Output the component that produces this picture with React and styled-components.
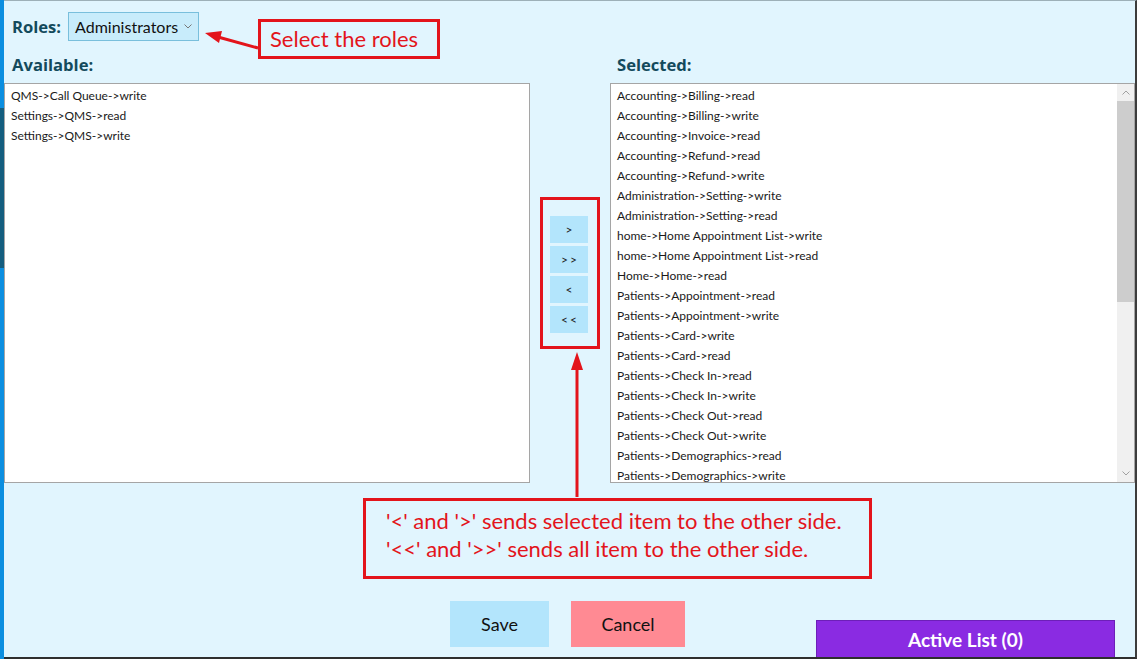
import styled, { createGlobalStyle } from 'styled-components'

const GlobalStyle = createGlobalStyle`
  html, body {
    margin: 0;
    padding: 0;
  }
  body {
    font-family: Lato, "Noto Sans", sans-serif;
    background: #e1f5fe;
  }
`

const RED = '#e3141b'

const Screen = styled.div`
  position: relative;
  display: flex;
  width: 1137px;
  height: 659px;
  overflow: hidden;
`

const Desktop = styled.div`
  width: 4px;
  flex-shrink: 0;
  background: linear-gradient(
    to bottom,
    #0b8ee0 0,
    #0b8ee0 108px,
    #145d7e 108px,
    #145d7e 268px,
    #0b8ee0 268px
  );
`

const Window = styled.div`
  flex: 1;
  display: flex;
  flex-direction: column;
  background: #e1f5fe;
  border-top: 1px solid #9db0b8;
  border-right: 2px solid #3c3c3c;
  border-bottom: 2px solid #2e2e2e;
`

const RolesBar = styled.div`
  display: flex;
  align-items: center;
  gap: 7px;
  padding: 11px 0 0 8px;
`

const Heading = styled.span`
  font-family: "Open Sans", Lato, sans-serif;
  font-weight: 700;
  font-size: 16.6px;
  color: #134a5c;
`

const RoleSelect = styled.div`
  display: flex;
  align-items: center;
  justify-content: space-between;
  width: 131px;
  height: 29px;
  box-sizing: border-box;
  padding: 0 6px 0 6px;
  background: #c8ecfb;
  border: 1px solid #79bfdc;
  font-size: 16px;
  color: #111;
`

const Columns = styled.div`
  display: grid;
  grid-template-columns: 526px 80px 525px;
  grid-template-rows: 42px 400px;
`

const ColumnLabel = styled.div`
  display: flex;
  align-items: flex-end;
  padding: 0 0 7px ${({ $indent }) => $indent}px;
  font-family: "Open Sans", Lato, sans-serif;
  font-weight: 700;
  font-size: 16.6px;
  line-height: 22px;
  color: #134a5c;
`

const ListBox = styled.div`
  display: flex;
  height: 400px;
  box-sizing: border-box;
  background: #fff;
  border: 1px solid #a5a5a5;
  overflow: hidden;
`

const Items = styled.div`
  flex: 1;
  padding: 2px 6px;
  overflow: hidden;
`

const Item = styled.div`
  font-size: 12px;
  line-height: 20px;
  color: #1a1a1a;
  white-space: nowrap;
`

const Scrollbar = styled.div`
  width: 17px;
  display: flex;
  flex-direction: column;
  background: #f0f0f0;
`

const ScrollArrow = styled.div`
  height: 17px;
  display: flex;
  align-items: center;
  justify-content: center;
`

const Thumb = styled.div`
  height: 201px;
  background: #cdcdcd;
`

const Track = styled.div`
  flex: 1;
`

const Middle = styled.div`
  display: flex;
  justify-content: center;
  align-items: flex-start;
  padding-top: 114px;
`

const Highlight = styled.div`
  display: flex;
  flex-direction: column;
  gap: 3px;
  padding: 16px 9px 13px 7px;
  border: 3px solid ${RED};
`

const MoveButton = styled.button`
  width: 38px;
  height: 27px;
  padding: 0;
  border: none;
  background: #b3e5fc;
  font-family: inherit;
  font-size: 12px;
  letter-spacing: 2px;
  text-indent: 2px;
  color: #222;
`

const Footer = styled.div`
  flex: 1;
  display: grid;
  grid-template-columns: 1fr auto 1fr;
  align-items: end;
`

const Actions = styled.div`
  grid-column: 2;
  display: flex;
  gap: 22px;
  margin: 0 4px 10px 0;
`

const ActionButton = styled.button`
  width: ${({ $w }) => $w}px;
  height: 46px;
  border: none;
  background: ${({ $bg }) => $bg};
  font-family: inherit;
  font-size: 18px;
  color: #111;
`

const ActiveList = styled.button`
  grid-column: 3;
  justify-self: end;
  margin-right: 20px;
  width: 299px;
  height: 37px;
  background: #8a2be2;
  border: 1px solid #6d1fb8;
  border-bottom: none;
  font-family: inherit;
  font-weight: 700;
  font-size: 19px;
  color: #fff;
`

const Callout = styled.div`
  position: absolute;
  left: ${({ $x }) => $x}px;
  top: ${({ $y }) => $y}px;
  width: ${({ $w }) => $w}px;
  height: ${({ $h }) => $h}px;
  box-sizing: border-box;
  padding: ${({ $pad }) => $pad};
  border: 3px solid ${RED};
  color: ${RED};
  font-size: 22px;
  line-height: 28px;
  white-space: nowrap;
`

const Arrows = styled.svg`
  position: absolute;
  left: 0;
  top: 0;
  pointer-events: none;
`

const available = [
  'QMS->Call Queue->write',
  'Settings->QMS->read',
  'Settings->QMS->write',
]

const selected = [
  'Accounting->Billing->read',
  'Accounting->Billing->write',
  'Accounting->Invoice->read',
  'Accounting->Refund->read',
  'Accounting->Refund->write',
  'Administration->Setting->write',
  'Administration->Setting->read',
  'home->Home Appointment List->write',
  'home->Home Appointment List->read',
  'Home->Home->read',
  'Patients->Appointment->read',
  'Patients->Appointment->write',
  'Patients->Card->write',
  'Patients->Card->read',
  'Patients->Check In->read',
  'Patients->Check In->write',
  'Patients->Check Out->read',
  'Patients->Check Out->write',
  'Patients->Demographics->read',
  'Patients->Demographics->write',
  'Patients->Documents->read',
  'Patients->Documents->write',
]

const Chevron = ({ up, color = '#777' }) => (
  <svg width="8" height="5" viewBox="0 0 8 5">
    <polyline
      points={up ? '0.5,4.5 4,1 7.5,4.5' : '0.5,0.5 4,4 7.5,0.5'}
      fill="none"
      stroke={color}
      strokeWidth="1"
    />
  </svg>
)

const App = () => {
  return (
    <>
      <GlobalStyle />
      <Screen>
        <Desktop />
        <Window>
          <RolesBar>
            <Heading>Roles:</Heading>
            <RoleSelect>
              Administrators
              <Chevron />
            </RoleSelect>
          </RolesBar>

          <Columns>
            <ColumnLabel $indent={8}>Available:</ColumnLabel>
            <div />
            <ColumnLabel $indent={7}>Selected:</ColumnLabel>

            <ListBox>
              <Items>
                {available.map((a) => (
                  <Item key={a}>{a}</Item>
                ))}
              </Items>
            </ListBox>

            <Middle>
              <Highlight>
                <MoveButton>&gt;</MoveButton>
                <MoveButton>&gt;&gt;</MoveButton>
                <MoveButton>&lt;</MoveButton>
                <MoveButton>&lt;&lt;</MoveButton>
              </Highlight>
            </Middle>

            <ListBox>
              <Items>
                {selected.map((s) => (
                  <Item key={s}>{s}</Item>
                ))}
              </Items>
              <Scrollbar>
                <ScrollArrow>
                  <Chevron up color="#a0a0a0" />
                </ScrollArrow>
                <Thumb />
                <Track />
                <ScrollArrow>
                  <Chevron color="#a0a0a0" />
                </ScrollArrow>
              </Scrollbar>
            </ListBox>
          </Columns>

          <Footer>
            <Actions>
              <ActionButton $w={99} $bg="#b3e5fc">Save</ActionButton>
              <ActionButton $w={114} $bg="#ff8a93">Cancel</ActionButton>
            </Actions>
            <ActiveList>Active List (0)</ActiveList>
          </Footer>
        </Window>

        <Callout $x={258} $y={19} $w={182} $h={40} $pad="3px 0 0 9px">
          Select the roles
        </Callout>
        <Callout $x={363} $y={498} $w={509} $h={81} $pad="6px 0 0 20px">
          <div>'&lt;' and '&gt;' sends selected item to the other side.</div>
          <div>'&lt;&lt;' and '&gt;&gt;' sends all item to the other side.</div>
        </Callout>

        <Arrows width="1137" height="659" viewBox="0 0 1137 659">
          <line x1="258" y1="48" x2="218" y2="37" stroke={RED} strokeWidth="3" />
          <polygon points="205,33 222,31 219,43" fill={RED} />
          <line x1="577" y1="497" x2="577" y2="366" stroke={RED} strokeWidth="3" />
          <polygon points="577,352 571,370 583,370" fill={RED} />
        </Arrows>
      </Screen>
    </>
  )
}

export default App
